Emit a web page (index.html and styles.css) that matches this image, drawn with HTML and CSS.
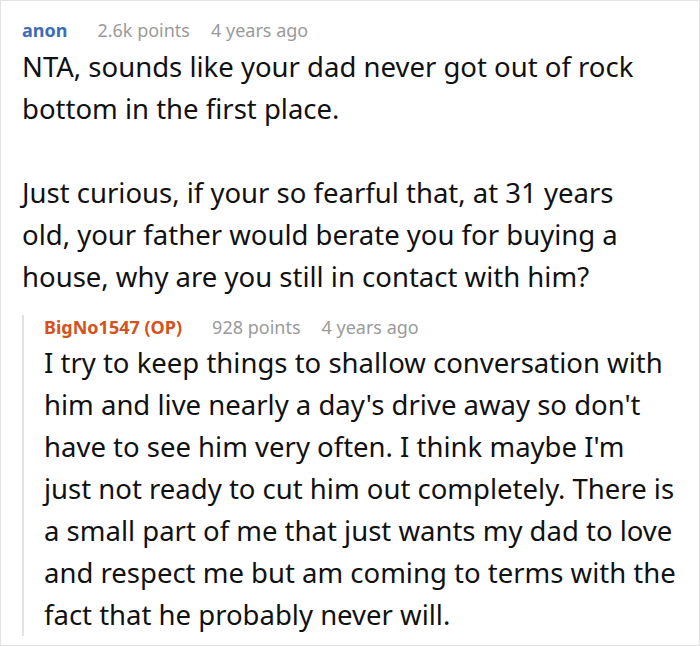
FILE: index.html
```html
<!DOCTYPE html>
<html lang="en">
<head>
<meta charset="utf-8">
<title>Comment</title>
<link rel="stylesheet" href="styles.css">
</head>
<body>
<div class="comment">
  <div class="meta">
    <span class="author author-user">anon</span>
    <span class="points">2.6k points</span>
    <span class="age">4 years ago</span>
  </div>
  <div class="text text-top">
    <p>NTA, sounds like your dad never got out of rock bottom in the first place.</p>
    <p>Just curious, if your so fearful that, at 31 years old, your father would berate you for buying a house, why are you still in contact with him?</p>
  </div>
  <div class="reply">
    <div class="meta">
      <span class="author author-op">BigNo1547 (OP)</span>
      <span class="points">928 points</span>
      <span class="age">4 years ago</span>
    </div>
    <div class="text">
      <p>I try to keep things to shallow conversation with him and live nearly a day's drive away so don't have to see him very often. I think maybe I'm just not ready to cut him out completely. There is a small part of me that just wants my dad to love and respect me but am coming to terms with the fact that he probably never will.</p>
    </div>
  </div>
</div>
</body>
</html>
```

FILE: styles.css
```css
html, body {
  margin: 0;
  padding: 0;
  background: #ffffff;
}

body {
  font-family: "Noto Sans", "Open Sans", sans-serif;
  color: #111111;
}

.comment {
  box-sizing: border-box;
  width: 700px;
  min-height: 646px;
  border: 1px solid #e3e3e3;
  padding: 17px 21px 8px 21px;
}

.meta {
  display: flex;
  align-items: baseline;
  font-size: 18px;
  line-height: 24px;
}

.author {
  font-weight: 700;
  margin-right: 30px;
}

.author-user {
  color: #3d6db6;
}

.author-op {
  color: #d4521d;
}

.points {
  color: #9a9a9a;
  margin-right: 21px;
}

.age {
  color: #9a9a9a;
}

.text {
  margin-top: 4px;
  font-size: 27.5px;
  line-height: 42px;
}

.text-top {
  margin-right: 23px;
}

.reply .text {
  margin-top: 3px;
}

.text p {
  margin: 0 0 42px 0;
}

.text p:last-child {
  margin-bottom: 0;
}

.reply {
  margin-top: 17px;
  border-left: 2px solid #e2e2e2;
  padding-left: 20px;
}
```
